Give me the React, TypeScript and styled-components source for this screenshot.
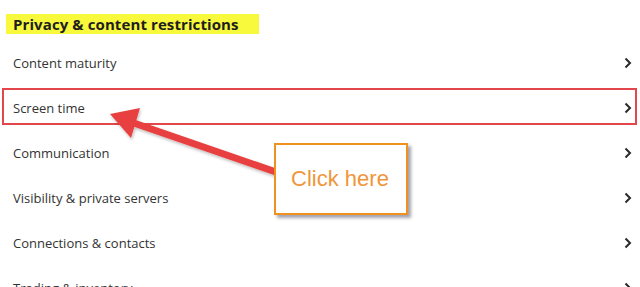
import React from "react";
import styled, { createGlobalStyle } from "styled-components";

const Global = createGlobalStyle`
  html, body { margin: 0; padding: 0; background: #ffffff; }
  body { overflow: hidden; }
`;

const Page = styled.div`
  position: relative;
  width: 640px;
  height: 287px;
  overflow: hidden;
  background: #fff;
  font-family: "Open Sans", "Liberation Sans", sans-serif;
  color: #2b2b2b;
`;

const Header = styled.div`
  padding: 13px 0 0 6px;
  height: 27px;
`;

const Title = styled.span`
  display: inline-block;
  background: #f8f83c;
  padding: 0 20px 0 7px;
  height: 20px;
  line-height: 20px;
  font-size: 15px;
  font-weight: 700;
  color: #1e1e1e;
  letter-spacing: 0.1px;
`;

const List = styled.div`
  display: flex;
  flex-direction: column;
`;

const Row = styled.div<{ $marked?: boolean }>`
  position: relative;
  height: 45px;
  display: flex;
  align-items: center;
  justify-content: space-between;
  padding: 0 8px 0 13px;
  font-size: 13px;
  color: #333;
  &::after {
    content: "";
    display: ${(p) => (p.$marked ? "block" : "none")};
    position: absolute;
    left: 2px;
    right: 3px;
    top: 3px;
    bottom: 5px;
    border: 2.5px solid #e3474b;
    pointer-events: none;
  }
`;

const Chevron = () => (
  <svg width="8" height="12" viewBox="0 0 8 12">
    <path d="M1.5 1.5 L6 6 L1.5 10.5" fill="none" stroke="#2a2a2a" strokeWidth="2" />
  </svg>
);

const Arrow = styled.svg`
  position: absolute;
  left: 0;
  top: 0;
  pointer-events: none;
`;

const Callout = styled.div`
  position: absolute;
  left: 274px;
  top: 143px;
  width: 128px;
  height: 68px;
  border: 2px solid #f0901e;
  background: #fff;
  box-shadow: 3px 3px 3px rgba(90, 90, 110, 0.55);
  display: flex;
  align-items: center;
  justify-content: center;
  padding-right: 2px;
  font-family: "Liberation Sans", Arial, sans-serif;
  font-size: 22px;
  color: #f0963a;
`;

const items = [
  "Content maturity",
  "Screen time",
  "Communication",
  "Visibility & private servers",
  "Connections & contacts",
  "Trading & inventory",
];

export default function App() {
  return (
    <Page>
      <Global />
      <Header>
        <Title>Privacy &amp; content restrictions</Title>
      </Header>
      <List>
        {items.map((t, i) => (
          <Row key={t} $marked={i === 1}>
            <span>{t}</span>
            <Chevron />
          </Row>
        ))}
      </List>
      <Arrow width="640" height="287" viewBox="0 0 640 287">
        <defs>
          <filter id="sh" x="-10%" y="-10%" width="120%" height="130%">
            <feDropShadow dx="1" dy="2" stdDeviation="1.5" floodColor="#000" floodOpacity="0.25" />
          </filter>
        </defs>
        <g filter="url(#sh)">
          <line x1="128" y1="121" x2="276" y2="172" stroke="#e8413f" strokeWidth="7" />
          <polygon points="110,114 140,108 131,138" fill="#e8413f" />
        </g>
      </Arrow>
      <Callout>Click here</Callout>
    </Page>
  );
}
